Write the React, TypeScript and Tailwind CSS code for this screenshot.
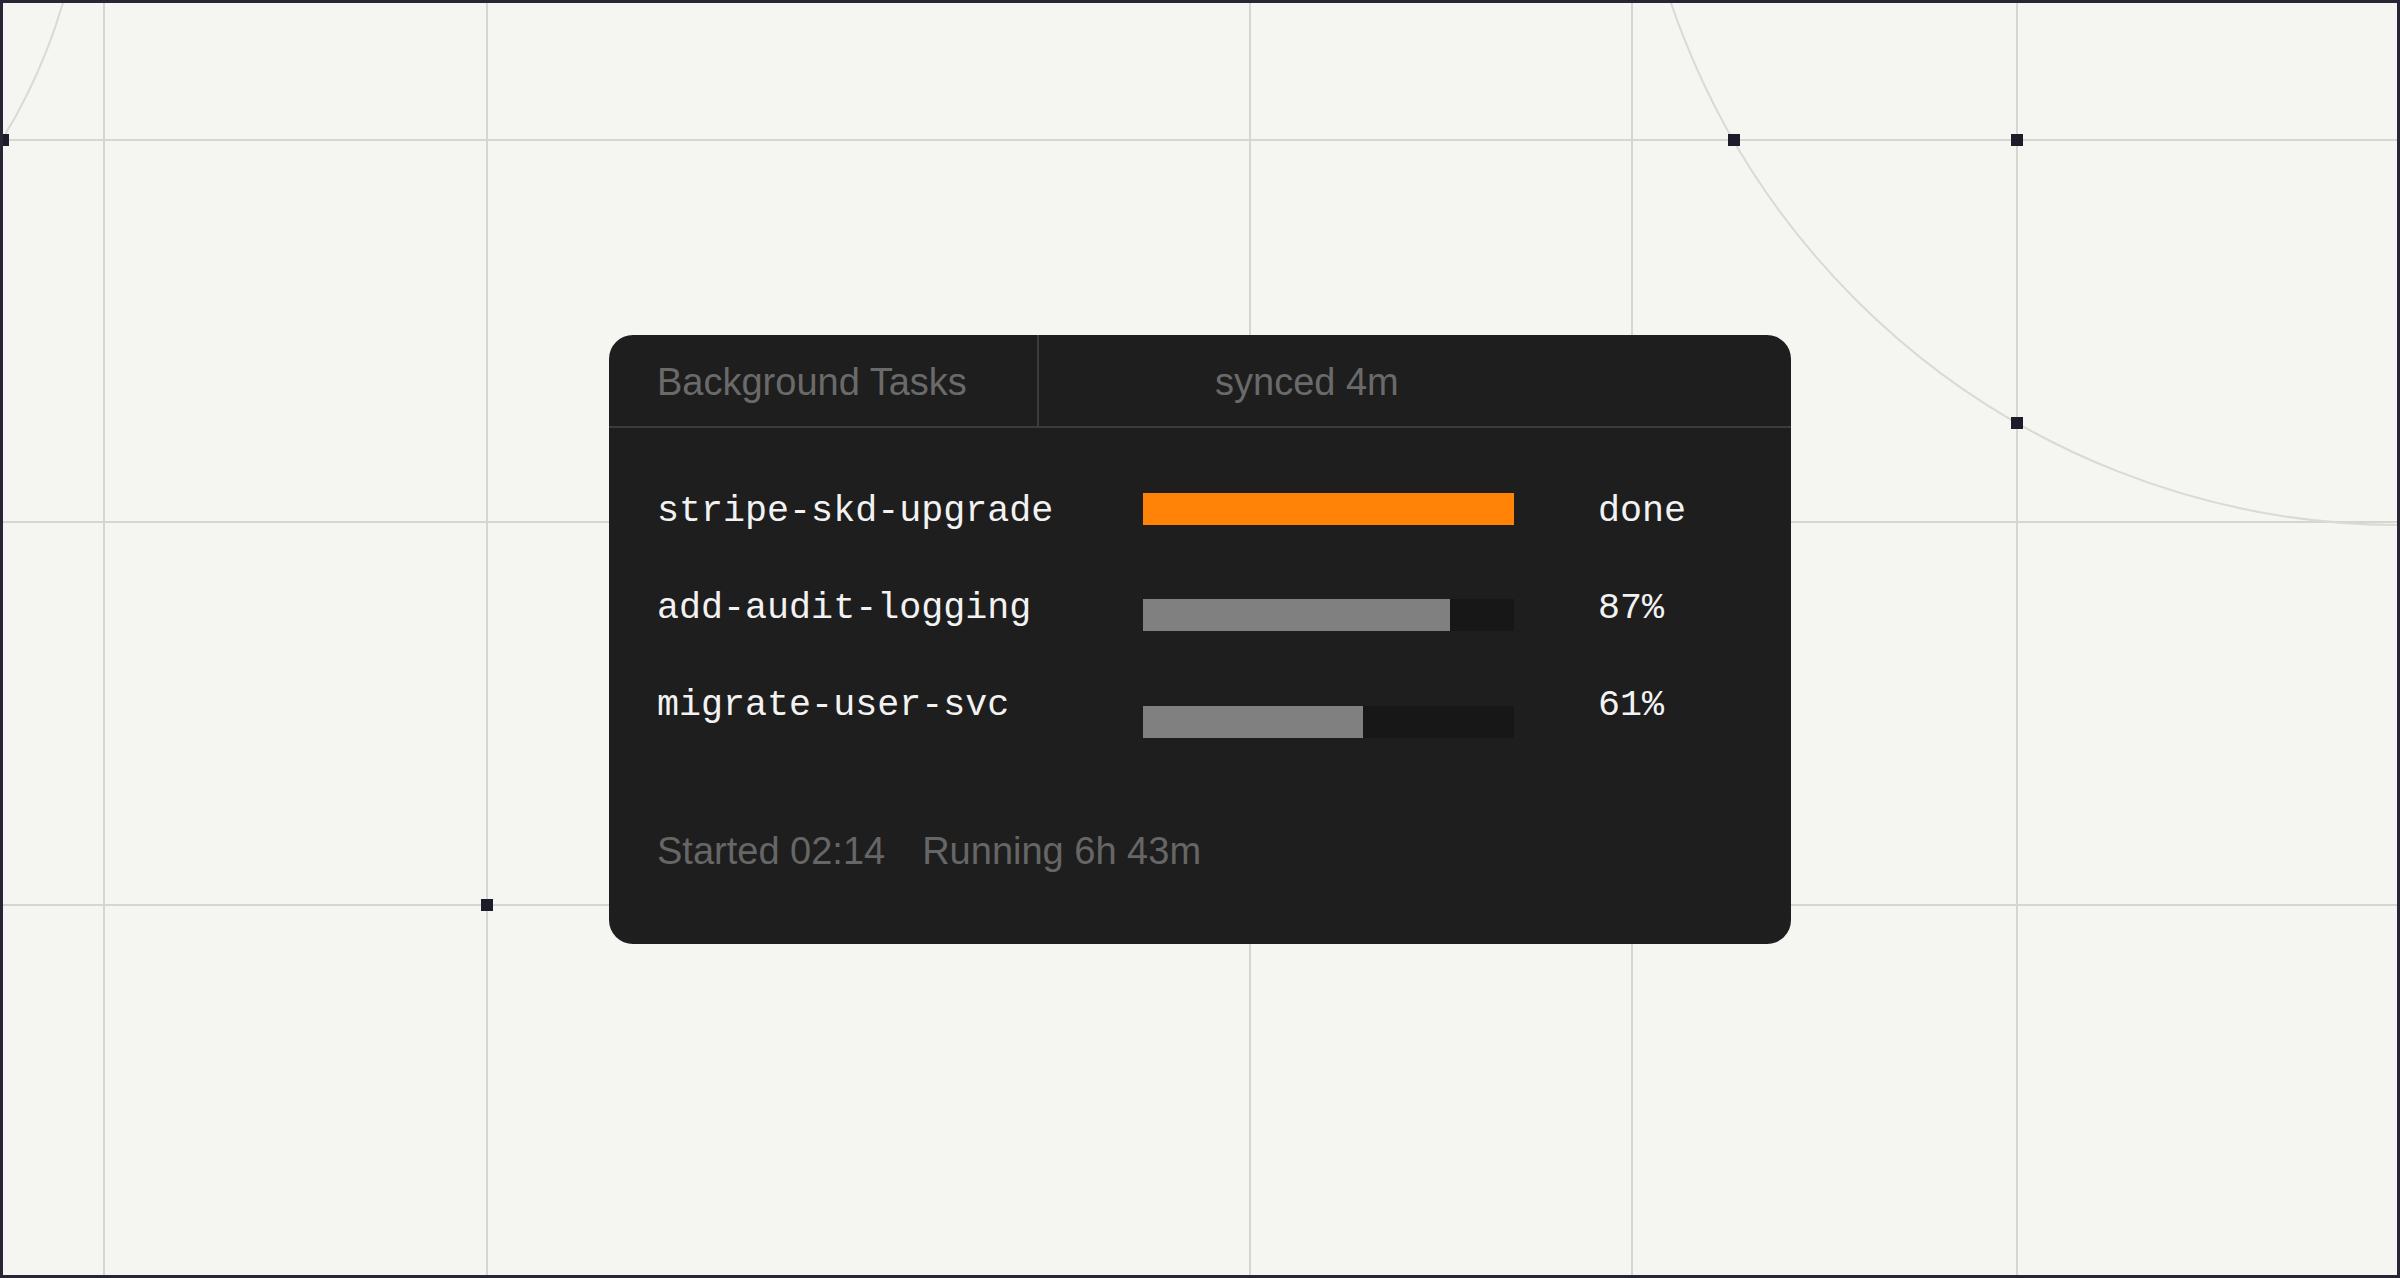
import React from "react";

type Task = { name: string; fill: number; status: string; done?: boolean };

const tasks: Task[] = [
  { name: "stripe-skd-upgrade", fill: 1, status: "done", done: true },
  { name: "add-audit-logging", fill: 0.827, status: "87%" },
  { name: "migrate-user-svc", fill: 0.592, status: "61%" },
];

const sans = { fontFamily: '"Liberation Sans", Arial, sans-serif' };
const mono = { fontFamily: '"Liberation Mono", "Courier New", monospace' };

// Canvas decoration: guide grid, construction arcs and anchor handles.
function Backdrop() {
  const vx = [104, 487, 1250, 1632, 2017];
  const hy = [140, 522, 905];
  const handles: [number, number][] = [
    [3, 140],
    [1734, 140],
    [2017, 140],
    [2017, 423],
    [487, 905],
  ];
  return (
    <svg className="absolute inset-0 h-full w-full" aria-hidden="true">
      <g transform="translate(-3,-3)">
        {vx.map((x) => (
          <line key={`v${x}`} x1={x} y1={0} x2={x} y2={1278} stroke="#d6d6d1" strokeWidth={2} />
        ))}
        {hy.map((y) => (
          <line key={`h${y}`} x1={0} y1={y} x2={2400} y2={y} stroke="#d6d6d1" strokeWidth={2} />
        ))}
        <circle cx={2400} cy={-245} r={770} fill="none" stroke="#dadad5" strokeWidth={2} />
        <circle cx={-468} cy={-152} r={553} fill="none" stroke="#dadad5" strokeWidth={2} />
        {handles.map(([x, y]) => (
          <rect key={`${x}-${y}`} x={x - 6} y={y - 6} width={12} height={12} fill="#1c1c2b" />
        ))}
      </g>
    </svg>
  );
}

export default function App() {
  return (
    <div className="relative flex h-screen w-full items-center justify-center overflow-hidden border-[3px] border-[#262634] bg-[#f5f5f1]">
      <Backdrop />
      <div className="relative flex w-[1182px] flex-col overflow-hidden rounded-[24px] bg-[#1e1e1e]">
        {/* header */}
        <div className="flex h-[93px] border-b-2 border-[#3c3c3c] text-[38px] text-[#6a6a6a]" style={sans}>
          <div className="flex w-[430px] items-center border-r-2 border-[#3c3c3c] pl-[48px] pt-[4px]">
            Background Tasks
          </div>
          <div className="flex flex-1 items-center pl-[176px] pt-[4px]">synced 4m</div>
        </div>

        {/* task rows */}
        <div className="flex pl-[48px] pt-[35px]">
          <div className="flex w-[486px] flex-col text-[36.7px] leading-[97px] text-[#f2f2f2]" style={mono}>
            {tasks.map((t) => (
              <div key={t.name}>{t.name}</div>
            ))}
          </div>
          <div className="flex w-[371px] flex-col gap-[74.5px] pt-[30px]">
            {tasks.map((t) => (
              <div key={t.name} className="h-[32px] w-full bg-[#171717]">
                <div
                  className={t.done ? "h-full bg-[#ff8306]" : "h-full bg-[#808080]"}
                  style={{ width: `${t.fill * 100}%` }}
                />
              </div>
            ))}
          </div>
          <div className="flex flex-col pl-[84px] text-[36.7px] leading-[97px] text-[#f2f2f2]" style={mono}>
            {tasks.map((t) => (
              <div key={t.name}>{t.status}</div>
            ))}
          </div>
        </div>

        {/* footer */}
        <div className="flex gap-[37px] px-[48px] pb-[72px] pt-[76px] text-[38px] leading-[42px] text-[#666666]" style={sans}>
          <span>Started 02:14</span>
          <span>Running 6h 43m</span>
        </div>
      </div>
    </div>
  );
}
